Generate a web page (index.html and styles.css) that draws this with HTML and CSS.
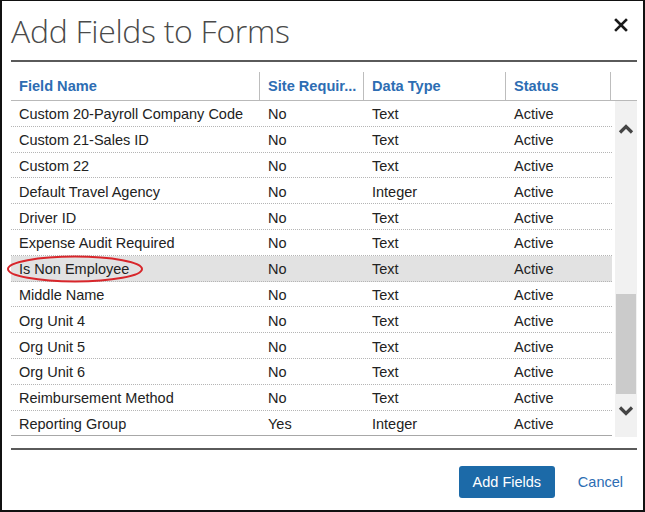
FILE: index.html
```html
<!DOCTYPE html>
<html>
<head>
<meta charset="utf-8">
<link rel="stylesheet" href="styles.css">
</head>
<body>
<div class="dialog">
  <div class="titlebar">
    <h1 class="title">Add Fields to Forms</h1>
    <button class="close" aria-label="Close">
      <svg width="14" height="14" viewBox="0 0 14 14"><path d="M2 2 L12 12 M12 2 L2 12" stroke="#1a1a1a" stroke-width="2.6" stroke-linecap="square"/></svg>
    </button>
  </div>
  <div class="grid">
    <div class="head">
      <div class="hcell c1">Field Name</div>
      <div class="hcell c2">Site Requir...</div>
      <div class="hcell c3">Data Type</div>
      <div class="hcell c4">Status</div>
      <div class="hcell c5"></div>
    </div>
    <div class="bodywrap">
      <div class="rows">
        <div class="row"><div class="cell c1">Custom 20-Payroll Company Code</div><div class="cell c2">No</div><div class="cell c3">Text</div><div class="cell c4">Active</div></div>
        <div class="row"><div class="cell c1">Custom 21-Sales ID</div><div class="cell c2">No</div><div class="cell c3">Text</div><div class="cell c4">Active</div></div>
        <div class="row"><div class="cell c1">Custom 22</div><div class="cell c2">No</div><div class="cell c3">Text</div><div class="cell c4">Active</div></div>
        <div class="row"><div class="cell c1">Default Travel Agency</div><div class="cell c2">No</div><div class="cell c3">Integer</div><div class="cell c4">Active</div></div>
        <div class="row"><div class="cell c1">Driver ID</div><div class="cell c2">No</div><div class="cell c3">Text</div><div class="cell c4">Active</div></div>
        <div class="row"><div class="cell c1">Expense Audit Required</div><div class="cell c2">No</div><div class="cell c3">Text</div><div class="cell c4">Active</div></div>
        <div class="row selected"><div class="cell c1">Is Non Employee</div><div class="cell c2">No</div><div class="cell c3">Text</div><div class="cell c4">Active</div>
          <svg class="mark" width="138" height="28" viewBox="0 0 138 28"><ellipse cx="69" cy="14" rx="67" ry="12.5" fill="none" stroke="#d8262b" stroke-width="2"/></svg>
        </div>
        <div class="row"><div class="cell c1">Middle Name</div><div class="cell c2">No</div><div class="cell c3">Text</div><div class="cell c4">Active</div></div>
        <div class="row"><div class="cell c1">Org Unit 4</div><div class="cell c2">No</div><div class="cell c3">Text</div><div class="cell c4">Active</div></div>
        <div class="row"><div class="cell c1">Org Unit 5</div><div class="cell c2">No</div><div class="cell c3">Text</div><div class="cell c4">Active</div></div>
        <div class="row"><div class="cell c1">Org Unit 6</div><div class="cell c2">No</div><div class="cell c3">Text</div><div class="cell c4">Active</div></div>
        <div class="row"><div class="cell c1">Reimbursement Method</div><div class="cell c2">No</div><div class="cell c3">Text</div><div class="cell c4">Active</div></div>
        <div class="row last"><div class="cell c1">Reporting Group</div><div class="cell c2">Yes</div><div class="cell c3">Integer</div><div class="cell c4">Active</div></div>
      </div>
      <div class="scrollbar">
        <div class="arrow up"><svg width="16" height="10" viewBox="0 0 16 10"><path d="M2 8.5 L8 2.5 L14 8.5" fill="none" stroke="#454545" stroke-width="3.2"/></svg></div>
        <div class="track">
          <div class="thumb"></div>
        </div>
        <div class="arrow down"><svg width="16" height="10" viewBox="0 0 16 10"><path d="M2 1.5 L8 7.5 L14 1.5" fill="none" stroke="#454545" stroke-width="3.2"/></svg></div>
      </div>
    </div>
  </div>
  <div class="footer">
    <button class="primary">Add Fields</button>
    <a class="cancel" href="#">Cancel</a>
  </div>
</div>
</body>
</html>
```

FILE: styles.css
```css
* { box-sizing: border-box; }
html, body { margin: 0; padding: 0; background: #fff; }
body { font-family: "Liberation Sans", Arial, sans-serif; font-size: 14.5px; color: #222; }

.dialog {
  width: 645px;
  height: 512px;
  border: 2px solid #111;
  border-top-width: 1px;
  padding: 0 6px 0 9px;
  display: flex;
  flex-direction: column;
}

.titlebar {
  height: 61px;
  border-bottom: 2px solid #5a5a5a;
  display: flex;
  align-items: flex-start;
  justify-content: space-between;
}
.title {
  margin: 9px 0 0 0;
  font-family: "Open Sans", sans-serif;
  font-weight: 300;
  font-size: 32px;
  line-height: 42px;
  color: #4a4a4a;
  letter-spacing: -0.3px;
}
.close {
  margin: 17px 9px 0 0;
  padding: 0;
  border: 0;
  background: none;
  width: 14px;
  height: 14px;
  display: flex;
}

.grid { margin-top: 10px; }
.head {
  display: flex;
  height: 29px;
  border-bottom: 1px solid #b9b9b9;
}
.hcell {
  border-right: 1px solid #bdbdbd;
  padding-left: 8px;
  line-height: 29px;
  font-size: 14.6px;
  font-weight: bold;
  color: #2d6db3;
  white-space: nowrap;
}
.hcell.c5 { border-right: 0; flex: 1; }
.c1 { width: 249px; }
.c2 { width: 104px; }
.c3 { width: 142px; }
.c4 { width: 105px; }

.bodywrap {
  display: flex;
  gap: 3px;
}
.rows { width: 601px; }
.row {
  position: relative;
  display: flex;
  height: 25.8px;
  border-bottom: 1px dotted #b5b5b5;
  align-items: center;
  padding-top: 2px;
}
.row.last { border-bottom: 1px solid #a8a8a8; }
.row.selected { background: #e2e2e2; }
.cell {
  padding-left: 8px;
  white-space: nowrap;
  line-height: 16px;
}
.row .c4 { flex: 1; }

.mark {
  position: absolute;
  left: -5px;
  top: -1px;
}

.scrollbar {
  width: 22px;
  height: 336px;
  background: #f1f1f1;
  display: flex;
  flex-direction: column;
  align-items: center;
}
.arrow {
  height: 20px;
  display: flex;
  align-items: center;
  justify-content: center;
}
.arrow.up { margin-top: 18px; }
.track {
  flex: 1;
  width: 20px;
  position: relative;
}
.thumb {
  margin-top: 155px;
  height: 100px;
  background: #cbcbcb;
}
.arrow.down { margin-bottom: 16px; }

.footer {
  margin-top: 11px;
  border-top: 2px solid #5a5a5a;
  display: flex;
  justify-content: flex-end;
  align-items: flex-start;
  padding-top: 16px;
  padding-right: 14px;
  gap: 23px;
}
.primary {
  width: 96px;
  height: 32px;
  border: 0;
  border-radius: 3px;
  background: #1c6aa8;
  color: #fff;
  font-family: "Liberation Sans", Arial, sans-serif;
  font-size: 14.5px;
  padding: 0;
}
.cancel {
  color: #2d6db3;
  text-decoration: none;
  font-size: 14.5px;
  line-height: 32px;
}
```
